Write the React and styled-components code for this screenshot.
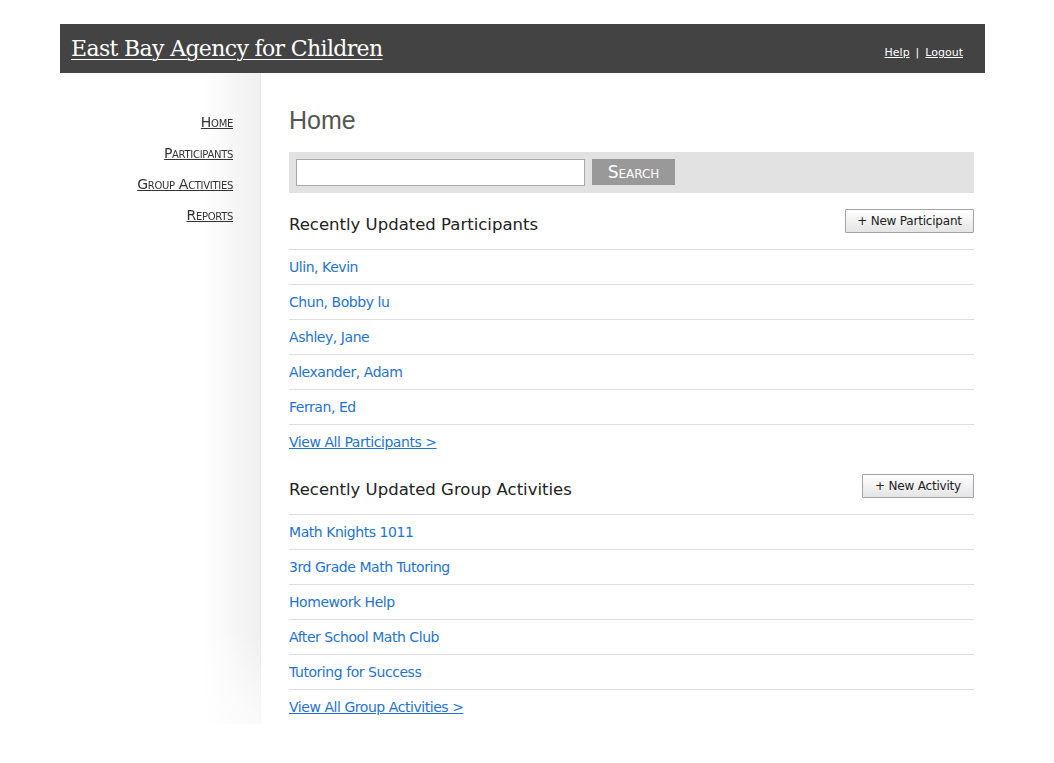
import React from "react";
import styled, { createGlobalStyle } from "styled-components";

const Global = createGlobalStyle`
  html, body { margin: 0; padding: 0; background: #fff; }
  body { font-family: "DejaVu Sans", "Liberation Sans", sans-serif; }
`;

const Page = styled.div`
  width: 925px;
  margin: 24px 0 0 60px;
`;

const Header = styled.header`
  height: 49px;
  background: #434343;
  display: flex;
  align-items: center;
  justify-content: space-between;
  padding: 0 22px 0 11px;
  box-sizing: border-box;
`;

const Brand = styled.a`
  font-family: "DejaVu Serif", Georgia, serif;
  font-size: 22px;
  color: #fff;
  text-decoration: underline;
  text-underline-offset: 3px;
  text-decoration-thickness: 1px;
  letter-spacing: -0.65px;
`;

const Util = styled.div`
  display: flex;
  align-items: center;
  gap: 6px;
  font-family: "DejaVu Sans", sans-serif;
  font-size: 11px;
  color: #fff;
  padding-top: 8px;
`;

const UtilLink = styled.a`
  color: #fff;
  text-decoration: underline;
`;

const Main = styled.div`
  display: flex;
`;

const Sidebar = styled.nav`
  width: 201px;
  flex: none;
  border-right: 1px solid #e8e8e8;
  background: linear-gradient(to right, #fff 72%, #efefef 100%);
  padding: 34px 27px 0 0;
  box-sizing: border-box;
  display: flex;
  flex-direction: column;
  align-items: flex-end;
  -webkit-mask-image: linear-gradient(to bottom, #000 85%, rgba(0,0,0,0.3) 100%);
  mask-image: linear-gradient(to bottom, #000 85%, rgba(0,0,0,0.3) 100%);
`;

const NavLink = styled.a`
  font-family: "DejaVu Sans", sans-serif;
  font-variant: small-caps;
  font-size: 14px;
  letter-spacing: -0.3px;
  line-height: 31px;
  color: #333;
  text-decoration: underline;
`;

const Content = styled.main`
  flex: 1;
  padding: 32px 11px 1px 28px;
`;

const Title = styled.h1`
  margin: 0 0 17px;
  font-family: "Liberation Sans", Arial, sans-serif;
  font-weight: normal;
  font-size: 25px;
  line-height: 30px;
  color: #555;
`;

const SearchBar = styled.form`
  background: #e2e2e2;
  height: 41px;
  padding: 7px;
  box-sizing: border-box;
  display: flex;
  gap: 7px;
`;

const SearchInput = styled.input`
  width: 289px;
  height: 27px;
  box-sizing: border-box;
  border: 1px solid #a9a9a9;
  background: #fff;
  margin: 0;
`;

const SearchButton = styled.button`
  width: 83px;
  height: 26px;
  border: none;
  background: #999;
  color: #fff;
  font-family: "DejaVu Sans", sans-serif;
  font-variant: small-caps;
  font-size: 17px;
  font-weight: 500;
  letter-spacing: 0;
  padding: 0;
`;

const SectionHead = styled.div`
  height: 57px;
  box-sizing: border-box;
  padding-top: 6px;
  border-bottom: 1px solid #ddd;
  display: flex;
  align-items: center;
  justify-content: space-between;
`;

const SectionTitle = styled.h2`
  margin: 0;
  font-family: "DejaVu Sans", sans-serif;
  font-weight: normal;
  font-size: 16.5px;
  letter-spacing: 0;
  color: #222;
`;

const NewButton = styled.button`
  height: 24px;
  width: ${(p) => p.$w}px;
  margin-bottom: 6px;
  border: 1px solid #a3a3a3;
  border-radius: 1px;
  background: linear-gradient(#fff, #e4e4e4);
  font-family: "DejaVu Sans", sans-serif;
  font-size: 12px;
  letter-spacing: -0.2px;
  color: #222;
  padding: 0;
`;

const Row = styled.div`
  height: 35px;
  box-sizing: border-box;
  border-bottom: 1px solid #dedede;
  display: flex;
  align-items: center;
`;

const ItemLink = styled.a`
  font-family: "DejaVu Sans", sans-serif;
  font-size: 14px;
  letter-spacing: -0.45px;
  color: #1f73d1;
  text-decoration: none;
`;

const ViewAll = styled.div`
  height: 33px;
  display: flex;
  align-items: center;
`;

const ViewAllLink = styled(ItemLink)`
  text-decoration: underline;
`;

const participants = ["Ulin, Kevin", "Chun, Bobby lu", "Ashley, Jane", "Alexander, Adam", "Ferran, Ed"];
const activities = ["Math Knights 1011", "3rd Grade Math Tutoring", "Homework Help", "After School Math Club", "Tutoring for Success"];

function Section({ title, button, width, items, viewAll }) {
  return (
    <section>
      <SectionHead>
        <SectionTitle>{title}</SectionTitle>
        <NewButton $w={width}>+ {button}</NewButton>
      </SectionHead>
      {items.map((n) => (
        <Row key={n}>
          <ItemLink href="#">{n}</ItemLink>
        </Row>
      ))}
      <ViewAll>
        <ViewAllLink href="#">{viewAll}</ViewAllLink>
      </ViewAll>
    </section>
  );
}

export default function App() {
  return (
    <>
      <Global />
      <Page>
        <Header>
          <Brand href="#">East Bay Agency for Children</Brand>
          <Util>
            <UtilLink href="#">Help</UtilLink>
            <span>|</span>
            <UtilLink href="#">Logout</UtilLink>
          </Util>
        </Header>
        <Main>
          <Sidebar>
            <NavLink href="#">Home</NavLink>
            <NavLink href="#">Participants</NavLink>
            <NavLink href="#">Group Activities</NavLink>
            <NavLink href="#">Reports</NavLink>
          </Sidebar>
          <Content>
            <Title>Home</Title>
            <SearchBar onSubmit={(e) => e.preventDefault()}>
              <SearchInput type="text" />
              <SearchButton type="submit">Search</SearchButton>
            </SearchBar>
            <Section
              title="Recently Updated Participants"
              button="New Participant"
              width={129}
              items={participants}
              viewAll="View All Participants >"
            />
            <Section
              title="Recently Updated Group Activities"
              button="New Activity"
              width={112}
              items={activities}
              viewAll="View All Group Activities >"
            />
          </Content>
        </Main>
      </Page>
    </>
  );
}
